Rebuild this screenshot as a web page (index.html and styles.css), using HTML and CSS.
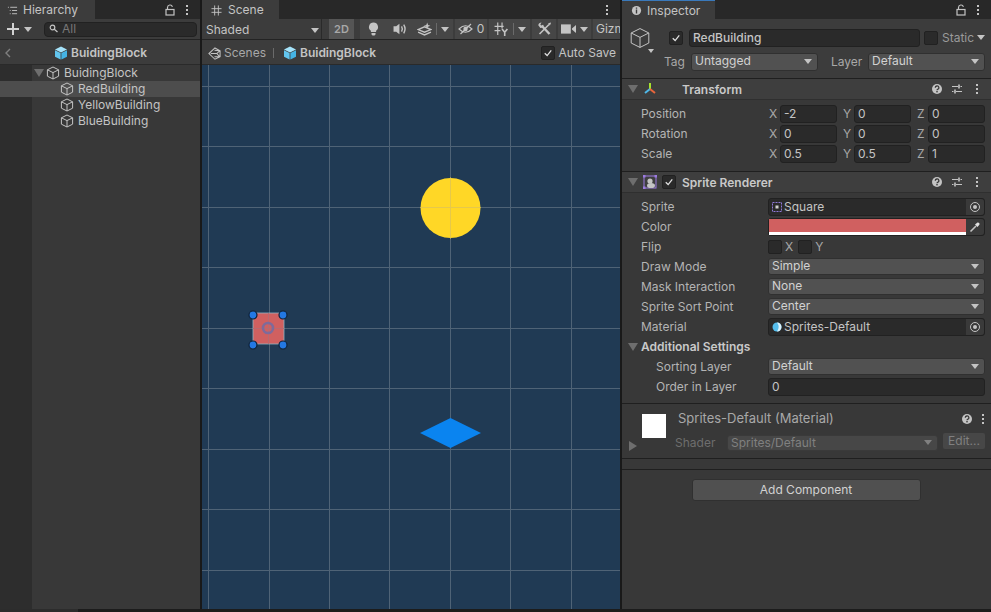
FILE: index.html
```html
<!DOCTYPE html>
<html lang="en">
<head>
    <meta charset="UTF-8">
    <meta name="viewport" content="width=device-width, initial-scale=1.0">
    <title>BuidingBlock - Unity</title>
    <link rel="stylesheet" href="styles.css">
</head>
<body>
    <svg class="defs" width="0" height="0">
        <symbol id="cube" viewBox="0 0 14 14">
            <path d="M7 1 L12.6 3.8 V10.2 L7 13 L1.4 10.2 V3.8 Z M1.4 3.8 L7 6.6 L12.6 3.8 M7 6.6 V13" fill="none" stroke="currentColor" stroke-width="1" stroke-linejoin="round" vector-effect="non-scaling-stroke"/>
        </symbol>
        <symbol id="cubeBlue" viewBox="0 0 14 14">
            <path d="M7 .5 L13 3.5 L7 6.5 L1 3.5 Z" fill="#a5e3fa"/>
            <path d="M1 4.2 L6.6 7 V13.6 L1 10.8 Z" fill="#62c5ee"/>
            <path d="M13 4.2 L7.4 7 V13.6 L13 10.8 Z" fill="#45b4e4"/>
        </symbol>
        <symbol id="lock" viewBox="0 0 12 12">
            <path d="M3.5 5 V3.4 A2.5 2.5 0 0 1 8.4 2.8" fill="none" stroke="currentColor" stroke-width="1.2"/>
            <rect x="2" y="5.5" width="8" height="5.5" fill="none" stroke="currentColor" stroke-width="1.2"/>
        </symbol>
        <symbol id="dots" viewBox="0 0 4 12">
            <rect x="1" y="1" width="2" height="2" fill="currentColor"/>
            <rect x="1" y="5" width="2" height="2" fill="currentColor"/>
            <rect x="1" y="9" width="2" height="2" fill="currentColor"/>
        </symbol>
        <symbol id="help" viewBox="0 0 12 12">
            <circle cx="6" cy="6" r="5" fill="currentColor"/>
            <path d="M4.3 4.8 A1.8 1.7 0 1 1 6.6 6.3 Q6 6.6 6 7.3" fill="none" stroke="#383838" stroke-width="1.3"/>
            <rect x="5.3" y="8" width="1.4" height="1.4" fill="#383838"/>
        </symbol>
        <symbol id="sliders" viewBox="0 0 12 12">
            <path d="M1 3.5 H7 M9.5 3.5 H11 M1 8.5 H2.5 M5 8.5 H11" stroke="currentColor" stroke-width="1.2"/>
            <path d="M8 1.5 V5.5 M4 6.5 V10.5" stroke="currentColor" stroke-width="1.6"/>
        </symbol>
        <symbol id="check" viewBox="0 0 14 14">
            <path d="M3.2 7.4 L6 10 L10.8 4" fill="none" stroke="#e0e0e0" stroke-width="1.5"/>
        </symbol>
        <symbol id="target" viewBox="0 0 12 12">
            <circle cx="6" cy="6" r="4.5" fill="none" stroke="currentColor" stroke-width="1"/>
            <circle cx="6" cy="6" r="2" fill="currentColor"/>
        </symbol>
    </svg>

    <div class="app">
        <section class="panel hierarchy">
            <div class="tabstrip">
                <div class="tab tab-hierarchy">
                    <svg class="tab-icon" viewBox="0 0 12 12"><path d="M1 2.5 H2 M3.5 2.5 H11 M3 6 H4 M5.5 6 H11 M3 9.5 H4 M5.5 9.5 H11" stroke="#c4c4c4" stroke-width="1"/></svg>
                    Hierarchy
                </div>
                <div class="tab-actions">
                    <svg class="ico-lock"><use href="#lock"/></svg>
                    <svg class="ico-dots"><use href="#dots"/></svg>
                </div>
            </div>
            <div class="hier-toolbar">
                <svg class="plus" viewBox="0 0 12 12"><path d="M6 0 V12 M0 6 H12" stroke="#d2d2d2" stroke-width="2"/></svg>
                <span class="caret caret-plus"></span>
                <div class="search">
                    <svg class="search-icon" viewBox="0 0 10 10"><circle cx="3.5" cy="3.5" r="2.3" fill="none" stroke="#c4c4c4" stroke-width="1.2"/><path d="M5.3 5.3 L8.5 8" stroke="#c4c4c4" stroke-width="1.2"/></svg>
                    All
                </div>
            </div>
            <div class="hier-crumb">
                <svg class="back" viewBox="0 0 6 10"><path d="M5 1 L1 5 L5 9" fill="none" stroke="#7f7f7f" stroke-width="1.4"/></svg>
                <svg class="cube-blue"><use href="#cubeBlue"/></svg>
                <b>BuidingBlock</b>
            </div>
            <div class="tree">
                <div class="tree-row">
                    <span class="fold-down"></span>
                    <svg class="cube"><use href="#cube"/></svg>
                    BuidingBlock
                </div>
                <div class="tree-row child selected"><svg class="cube"><use href="#cube"/></svg>RedBuilding</div>
                <div class="tree-row child"><svg class="cube"><use href="#cube"/></svg>YellowBuilding</div>
                <div class="tree-row child"><svg class="cube"><use href="#cube"/></svg>BlueBuilding</div>
            </div>
        </section>

        <section class="panel scene">
            <div class="tabstrip">
                <div class="tab tab-scene">
                    <svg class="tab-icon" viewBox="0 0 12 12"><path d="M.5 4 H11.5 M.5 8 H11.5 M4 .5 V11.5 M8 .5 V11.5" stroke="#c4c4c4" stroke-width="1"/></svg>
                    Scene
                </div>
                <div class="tab-actions">
                    <svg class="ico-dots"><use href="#dots"/></svg>
                </div>
            </div>
            <div class="scene-toolbar">
                <div class="shaded">Shaded<span class="caret"></span></div>
                <div class="tool tool-2d">2D</div>
                <div class="tool tool-bulb">
                    <svg class="tool-icon" viewBox="0 0 12 14"><path d="M6 .5 A4.5 4.5 0 0 1 8.6 8.7 V10 H3.4 V8.7 A4.5 4.5 0 0 1 6 .5 Z M4 11 H8 V12.4 L7 13.5 H5 L4 12.4 Z" fill="#c4c4c4"/></svg>
                </div>
                <div class="tool tool-sound">
                    <svg class="tool-icon" viewBox="0 0 14 12"><path d="M.5 3.5 H3 L6 1 V11 L3 8.5 H.5 Z" fill="#c4c4c4"/><path d="M8 3.5 Q9.5 6 8 8.5 M10 2 Q12.5 6 10 10" fill="none" stroke="#c4c4c4" stroke-width="1.3"/></svg>
                </div>
                <div class="tool tool-fx">
                    <svg class="tool-icon" viewBox="0 0 14 13"><path d="M1 7 L7 4.5 L13 7 L7 9.5 Z M1 9.5 L7 12 L13 9.5" fill="none" stroke="#c4c4c4" stroke-width="1.3"/><path d="M9.5 .5 L10.3 2.7 L12.5 3.5 L10.3 4.3 L9.5 6 L8.7 4.3 L6.5 3.5 L8.7 2.7 Z" fill="#c4c4c4"/></svg>
                    <i class="tool-sep"></i><span class="caret"></span>
                </div>
                <div class="tool tool-hidden">
                    <svg class="tool-icon" viewBox="0 0 15 12"><path d="M1 6 Q7.5 -.5 14 6 Q7.5 12.5 1 6 Z" fill="none" stroke="#c4c4c4" stroke-width="1.1"/><circle cx="7.5" cy="6" r="2.2" fill="#c4c4c4"/><path d="M2.5 11 L13 1" stroke="#c4c4c4" stroke-width="1.2"/></svg>
                    0
                </div>
                <div class="tool tool-grid">
                    <svg class="tool-icon" viewBox="0 0 14 13"><path d="M.5 4 H9 M.5 8 H6 M3.5 .5 V12 M7.5 .5 V6" fill="none" stroke="#c4c4c4" stroke-width="1.1"/><path d="M7.5 6.5 L10 9.5 L12.5 6.5 M10 9.5 V13" fill="none" stroke="#c4c4c4" stroke-width="1.5"/></svg>
                    <i class="tool-sep"></i><span class="caret"></span>
                </div>
                <div class="tool tool-wrench">
                    <svg class="tool-icon" viewBox="0 0 14 14"><path d="M4 3.5 L12 12" stroke="#c4c4c4" stroke-width="2.4"/><path d="M.8 3.2 A3.2 3.2 0 0 1 4 .5 L2.8 2.6 L4 4 L6 2.8 A3.2 3.2 0 0 1 2.8 6 Z" fill="#c4c4c4"/><path d="M11.5 2.5 L2 12" stroke="#c4c4c4" stroke-width="1.6"/><path d="M10.5 1.6 L13 .5 L13.5 1 L12.4 3.5 Z" fill="#c4c4c4"/></svg>
                </div>
                <div class="tool tool-camera">
                    <svg class="tool-icon" viewBox="0 0 13 10"><rect x="0" y="1" width="8.5" height="8" fill="#c4c4c4"/><path d="M9.5 4.5 L13 1.5 V8.5 L9.5 5.5 Z" fill="#c4c4c4"/></svg>
                    <span class="caret"></span>
                </div>
                <div class="tool tool-gizmos">Gizmos</div>
            </div>
            <div class="scene-crumb">
                <svg class="unity-logo" viewBox="0 0 14 14"><path d="M7.5 1 L13 4 V10.5 L7.5 13.2 L1 7 Z M7 3.5 L12.5 4 M7 10.5 L12.5 10.3 M3 7 H9.5 L12.5 4.2 M9.5 7 L12.5 10.3" fill="none" stroke="#c4c4c4" stroke-width="1.1"/></svg>
                <span class="crumb-scenes">Scenes</span>
                <i class="crumb-sep"></i>
                <svg class="cube-blue"><use href="#cubeBlue"/></svg>
                <b>BuidingBlock</b>
                <label class="autosave">
                    <span class="checkbox"><svg><use href="#check"/></svg></span>
                    Auto Save
                </label>
            </div>
            <svg class="viewport" viewBox="0 0 418 544">
                <g class="grid">
                    <path d="M6.5 0 V544 M67.5 0 V544 M127.5 0 V544 M187.5 0 V544 M248.5 0 V544 M308.5 0 V544 M369.5 0 V544"/>
                    <path d="M0 21.5 H418 M0 81.5 H418 M0 142.5 H418 M0 202.5 H418 M0 263.5 H418 M0 323.5 H418 M0 384.5 H418 M0 444.5 H418 M0 505.5 H418"/>
                </g>
                <circle cx="248.5" cy="143" r="30" fill="#ffd726"/>
                <path d="M248.5 112.5 V173.5 M218.5 142.5 H278.5" stroke="#e6c84a" stroke-width="1"/>
                <path d="M218 368 L248.5 353 L279 368 L248.5 383 Z" fill="#0a84f0"/>
                <rect x="51" y="248" width="31" height="31" fill="#d06060" stroke="#8fb3c4" stroke-width=".8"/>
                <path d="M51 263.5 H82 M66.5 248 V279" stroke="#b76a70" stroke-width="1"/>
                <circle cx="66" cy="263" r="5" fill="none" stroke="#7f6a9a" stroke-width="2.6"/>
                <g class="handles">
                    <circle cx="51" cy="250" r="4"/>
                    <circle cx="81" cy="250" r="4"/>
                    <circle cx="51" cy="280" r="4"/>
                    <circle cx="81" cy="280" r="4"/>
                </g>
            </svg>
        </section>

        <section class="panel inspector">
            <div class="tabstrip">
                <div class="tab tab-inspector">
                    <svg class="tab-icon" viewBox="0 0 12 12"><circle cx="6" cy="6" r="5" fill="#c4c4c4"/><path d="M6 5 V9.2 M6 2.6 V4" stroke="#3c3c3c" stroke-width="1.5"/></svg>
                    Inspector
                </div>
                <div class="tab-actions">
                    <svg class="ico-lock"><use href="#lock"/></svg>
                    <svg class="ico-dots"><use href="#dots"/></svg>
                </div>
            </div>

            <div class="object-head">
                <div class="object-row">
                    <svg class="object-cube"><use href="#cube"/></svg>
                    <span class="caret object-caret"></span>
                    <span class="checkbox"><svg><use href="#check"/></svg></span>
                    <div class="field name-field">RedBuilding</div>
                    <span class="checkbox"></span>
                    <span class="static">Static</span>
                    <span class="caret static-caret"></span>
                </div>
                <div class="object-row tag-row">
                    <span class="tag-label">Tag</span>
                    <div class="dropdown tag-drop">Untagged<span class="caret"></span></div>
                    <span class="layer-label">Layer</span>
                    <div class="dropdown layer-drop">Default<span class="caret"></span></div>
                </div>
            </div>

            <div class="comp-head">
                <span class="fold-down"></span>
                <svg class="comp-icon" viewBox="0 0 14 14"><path d="M7 1 V7" stroke="#a6e22e" stroke-width="2"/><path d="M7 7 L2 11" stroke="#4fb8e8" stroke-width="2"/><path d="M7 7 L12 11" stroke="#e8663c" stroke-width="2"/></svg>
                <span class="comp-spacer"></span>
                <b class="comp-title">Transform</b>
                <svg class="ico-help"><use href="#help"/></svg>
                <svg class="ico-sliders"><use href="#sliders"/></svg>
                <svg class="ico-dots"><use href="#dots"/></svg>
            </div>
            <div class="comp-body body-transform">
                <div class="prop">
                    <span class="prop-label">Position</span>
                    <div class="vec"><span>X</span><div class="field">-2</div><span>Y</span><div class="field">0</div><span>Z</span><div class="field">0</div></div>
                </div>
                <div class="prop">
                    <span class="prop-label">Rotation</span>
                    <div class="vec"><span>X</span><div class="field">0</div><span>Y</span><div class="field">0</div><span>Z</span><div class="field">0</div></div>
                </div>
                <div class="prop">
                    <span class="prop-label">Scale</span>
                    <div class="vec"><span>X</span><div class="field">0.5</div><span>Y</span><div class="field">0.5</div><span>Z</span><div class="field">1</div></div>
                </div>
            </div>

            <div class="comp-head">
                <span class="fold-down"></span>
                <svg class="comp-icon" viewBox="0 0 14 14"><rect x="1" y="1" width="12" height="12" fill="none" stroke="#9b7be0" stroke-width="1"/><path d="M0 0 H2.5 V2.5 H0 Z M11.5 0 H14 V2.5 H11.5 Z M0 11.5 H2.5 V14 H0 Z" fill="#9b7be0"/><circle cx="7" cy="6" r="2.6" fill="#c4c4c4"/><ellipse cx="8" cy="10.5" rx="4" ry="2.6" fill="#c4c4c4"/></svg>
                <span class="checkbox comp-check"><svg><use href="#check"/></svg></span>
                <b class="comp-title">Sprite Renderer</b>
                <svg class="ico-help"><use href="#help"/></svg>
                <svg class="ico-sliders"><use href="#sliders"/></svg>
                <svg class="ico-dots"><use href="#dots"/></svg>
            </div>
            <div class="comp-body body-sprite">
                <div class="prop">
                    <span class="prop-label">Sprite</span>
                    <div class="field object-field">
                        <svg class="asset-icon" viewBox="0 0 10 10"><rect x=".5" y=".5" width="9" height="9" fill="none" stroke="#8f78d8" stroke-dasharray="2 1"/><rect x="3.5" y="3.5" width="3" height="3" fill="#d2d2d2"/></svg>
                        Square
                        <span class="picker"><svg><use href="#target"/></svg></span>
                    </div>
                </div>
                <div class="prop">
                    <span class="prop-label">Color</span>
                    <div class="color-field">
                        <div class="swatch"></div>
                        <span class="picker">
                            <svg viewBox="0 0 12 12"><path d="M1.5 10.5 L7 5" stroke="#c4c4c4" stroke-width="1.6"/><path d="M6 3.5 L8.5 1.5 A1.6 1.6 0 0 1 10.5 3.5 L8.5 6 Z" fill="#e0e0e0"/></svg>
                        </span>
                    </div>
                </div>
                <div class="prop">
                    <span class="prop-label">Flip</span>
                    <div class="flip">
                        <span class="checkbox"></span><span>X</span>
                        <span class="checkbox"></span><span>Y</span>
                    </div>
                </div>
                <div class="prop">
                    <span class="prop-label">Draw Mode</span>
                    <div class="dropdown prop-drop">Simple<span class="caret"></span></div>
                </div>
                <div class="prop">
                    <span class="prop-label">Mask Interaction</span>
                    <div class="dropdown prop-drop">None<span class="caret"></span></div>
                </div>
                <div class="prop">
                    <span class="prop-label">Sprite Sort Point</span>
                    <div class="dropdown prop-drop">Center<span class="caret"></span></div>
                </div>
                <div class="prop">
                    <span class="prop-label">Material</span>
                    <div class="field object-field">
                        <svg class="asset-icon" viewBox="0 0 10 10"><circle cx="5" cy="5" r="4.5" fill="#55bdec"/><path d="M5 .5 A4.5 4.5 0 0 1 5 9.5 A7 7 0 0 0 5 .5" fill="#dff3fb"/></svg>
                        Sprites-Default
                        <span class="picker"><svg><use href="#target"/></svg></span>
                    </div>
                </div>
                <div class="prop">
                    <span class="fold-down"></span>
                    <b class="sub-title">Additional Settings</b>
                </div>
                <div class="prop indented">
                    <span class="prop-label">Sorting Layer</span>
                    <div class="dropdown prop-drop">Default<span class="caret"></span></div>
                </div>
                <div class="prop indented">
                    <span class="prop-label">Order in Layer</span>
                    <div class="field prop-input">0</div>
                </div>
            </div>

            <div class="material">
                <div class="material-thumb"></div>
                <span class="fold-right"></span>
                <div class="material-info">
                    <div class="material-top">
                        <span>Sprites-Default (Material)</span>
                        <svg class="ico-help"><use href="#help"/></svg>
                        <svg class="ico-dots"><use href="#dots"/></svg>
                    </div>
                    <div class="material-shader">
                        <span class="shader-label">Shader</span>
                        <div class="dropdown shader-drop">Sprites/Default<span class="caret"></span></div>
                        <div class="edit-btn">Edit...</div>
                    </div>
                </div>
            </div>
            <div class="material-foot"></div>
            <div class="add-row">
                <div class="add-btn">Add Component</div>
            </div>
        </section>
    </div>
    <div class="statusbar"><div class="status-progress"></div></div>
</body>
</html>
```

FILE: styles.css
```css
* {
    box-sizing: border-box;
}

html, body {
    margin: 0;
    height: 100%;
    overflow: hidden;
}

body {
    background-color: #191919;
    color: #c4c4c4;
    font-family: Inter, "Noto Sans", sans-serif;
    font-size: 12px;
    line-height: 1;
}

b {
    font-weight: 600;
}

.defs {
    display: block;
    height: 0;
}

.app {
    display: flex;
    gap: 2px;
    height: 609px;
}

.panel {
    display: flex;
    flex-direction: column;
    background-color: #383838;
    overflow: hidden;
}

.hierarchy { width: 200px; }
.scene { width: 418px; }
.inspector { width: 369px; }

/* tabs */
.tabstrip {
    display: flex;
    flex: none;
    justify-content: space-between;
    height: 19px;
    background-color: #282828;
}

.tab {
    display: flex;
    align-items: center;
    gap: 5px;
    padding: 1px 0 0 7px;
    background-color: #3c3c3c;
    font-size: 12px;
    color: #c4c4c4;
}

.tab-hierarchy { width: 95px; }
.tab-scene { width: 77px; padding-left: 9px; gap: 6px; }
.tab-inspector { width: 93px; padding-left: 9px; border-top: 1px solid #3a79bb; }

.tab-icon {
    flex: none;
    width: 11px;
    height: 11px;
}

.tab-actions {
    display: flex;
    align-items: center;
    gap: 9px;
    padding-right: 11px;
}

.ico-lock { width: 12px; height: 12px; color: #c4c4c4; }
.ico-dots { width: 4px; height: 12px; color: #c4c4c4; flex: none; }
.ico-help { width: 12px; height: 12px; color: #c4c4c4; flex: none; }
.ico-sliders { width: 12px; height: 12px; color: #c4c4c4; flex: none; }

.caret {
    display: inline-block;
    flex: none;
    width: 0;
    height: 0;
    border-left: 4px solid transparent;
    border-right: 4px solid transparent;
    border-top: 5px solid #c4c4c4;
}

.fold-down {
    flex: none;
    width: 0;
    height: 0;
    border-left: 5px solid transparent;
    border-right: 5px solid transparent;
    border-top: 8px solid #6e6e6e;
}

.fold-right {
    flex: none;
    width: 0;
    height: 0;
    border-top: 5px solid transparent;
    border-bottom: 5px solid transparent;
    border-left: 8px solid #6e6e6e;
}

/* hierarchy */
.hier-toolbar {
    display: flex;
    flex: none;
    align-items: center;
    height: 21px;
    padding-left: 7px;
    background-color: #3c3c3c;
    border-bottom: 1px solid #232323;
}

.plus { width: 12px; height: 12px; flex: none; }
.caret-plus { margin: 0 0 0 5px; }

.search {
    display: flex;
    align-items: center;
    gap: 3px;
    width: 153px;
    height: 15px;
    margin-left: 12px;
    padding-left: 4px;
    background-color: #2a2a2a;
    border-radius: 4px;
    border: 1px solid #212121;
    color: #787878;
}

.search-icon { width: 10px; height: 10px; }

.hier-crumb {
    display: flex;
    flex: none;
    align-items: center;
    height: 25px;
    padding: 2px 0 0 5px;
    background-color: #3c3c3c;
    border-bottom: 1px solid #2a2a2a;
    color: #c4c4c4;
}

.back { width: 6px; height: 10px; margin-right: 43px; }
.cube-blue { width: 14px; height: 14px; flex: none; margin-right: 3px; }

.tree {
    flex: 1;
    background: linear-gradient(to right, #2d2d2d 32px, #383838 32px);
}

.tree-row {
    display: flex;
    align-items: center;
    height: 16px;
    padding-left: 34px;
    color: #c4c4c4;
}

.tree-row .cube { margin-left: 2px; margin-right: 4px; }
.tree-row.child { padding-left: 60px; }
.tree-row.child .cube { margin-left: 0; margin-right: 4px; }
.tree-row.selected { background-color: #4d4d4d; }

.cube {
    width: 14px;
    height: 14px;
    flex: none;
    margin-right: 4px;
    color: #c4c4c4;
}

/* scene */
.scene-toolbar {
    display: flex;
    flex: none;
    align-items: stretch;
    height: 21px;
    gap: 2px;
    background-color: #3c3c3c;
    border-bottom: 1px solid #232323;
}

.shaded {
    display: flex;
    align-items: center;
    justify-content: space-between;
    flex: none;
    width: 120px;
    padding: 2px 2px 0 4px;
    margin-right: 5px;
    border-right: 1px solid #2a2a2a;
    color: #c4c4c4;
}

.tool {
    display: flex;
    flex: none;
    align-items: center;
    justify-content: center;
    gap: 4px;
    background-color: #464646;
    color: #c4c4c4;
    overflow: hidden;
}

.tool-icon { height: 14px; width: 15px; flex: none; }
.tool-sep { width: 1px; height: 12px; background-color: #6a6a6a; }

.tool-2d { width: 25px; margin-right: 4px; font-size: 11px; font-weight: 600; background-color: #555; color: #a8a8a8; }
.tool-bulb { width: 27px; margin-right: -2px; }
.tool-sound { width: 26px; margin-right: -2px; }
.tool-fx { width: 40px; }
.tool-hidden { width: 32px; }
.tool-grid { width: 41px; }
.tool-wrench { width: 24px; }
.tool-camera { width: 33px; }
.tool-gizmos { flex: 1; justify-content: flex-start; padding-left: 3px; white-space: nowrap; }

.scene-crumb {
    display: flex;
    flex: none;
    align-items: center;
    height: 25px;
    padding: 2px 0 0 6px;
    background-color: #3c3c3c;
    border-bottom: 1px solid #2a2a2a;
}

.unity-logo { width: 13px; height: 13px; margin-right: 3px; }
.crumb-scenes { color: #a8a8a8; }
.crumb-sep { width: 1px; height: 10px; background-color: #6a6a6a; margin: 0 9px 0 7px; }

.autosave {
    display: flex;
    align-items: center;
    gap: 3px;
    margin-left: auto;
    padding-right: 4px;
    color: #c4c4c4;
}

.checkbox {
    display: block;
    flex: none;
    width: 14px;
    height: 14px;
    background-color: #2a2a2a;
    border: 1px solid #212121;
    border-radius: 2px;
}

.checkbox svg {
    display: block;
    width: 12px;
    height: 12px;
}

.viewport {
    display: block;
    flex: 1;
    width: 418px;
    background-color: #203a54;
}

.grid path {
    fill: none;
    stroke: #4f6376;
    stroke-width: 1;
}

.handles circle {
    fill: #2378e4;
    stroke: #10233a;
    stroke-width: 1.2;
}

/* inspector */
.object-head {
    flex: none;
    height: 60px;
    padding-top: 9px;
    background-color: #3c3c3c;
    border-bottom: 1px solid #1f1f1f;
}

.object-row {
    display: flex;
    align-items: center;
    height: 19px;
}

.object-cube {
    width: 22px;
    height: 22px;
    flex: none;
    margin-left: 7px;
    color: #c4c4c4;
}

.object-caret { align-self: flex-end; margin: 0 0 -6px -3px; border-left-width: 3px; border-right-width: 3px; border-top-width: 4px; }
.object-row .checkbox:nth-of-type(2) { margin-left: 15px; }
.name-field { width: 231px; margin: 0 4px 0 6px; font-weight: 500; color: #d2d2d2; }

.static { margin-left: 4px; color: #9a9a9a; }
.static-caret { margin-left: 3px; }

.tag-row { margin-top: 5px; }
.tag-label { margin-left: 42px; width: 27px; color: #a8a8a8; }
.layer-label { margin-left: 13px; width: 37px; color: #a8a8a8; }
.tag-drop { width: 127px; }
.layer-drop { width: 117px; }

.field {
    display: flex;
    align-items: center;
    height: 18px;
    padding-left: 3px;
    background-color: #2a2a2a;
    border: 1px solid #212121;
    border-radius: 3px;
    color: #c4c4c4;
}

.dropdown {
    display: flex;
    align-items: center;
    justify-content: space-between;
    height: 18px;
    padding: 0 5px 1px 3px;
    background-color: #515151;
    border: 1px solid #303030;
    border-radius: 3px;
    color: #d2d2d2;
}

.comp-head {
    display: flex;
    flex: none;
    align-items: center;
    height: 21px;
    padding: 0 12px 0 6px;
    background-color: #3e3e3e;
    border-bottom: 1px solid #2f2f2f;
}

.comp-icon { width: 14px; height: 14px; flex: none; margin: 0 1px 0 5px; }
.comp-spacer { width: 17px; flex: none; }
.comp-check { margin-left: 4px; margin-right: 6px; flex: none; }
.comp-spacer + .comp-title { margin-left: 7px; }
.comp-title { flex: 1; padding-top: 2px; color: #c9c9c9; font-weight: 600; }
.comp-head .ico-sliders { margin: 0 12px 0 8px; }

.comp-body {
    flex: none;
    padding: 4px 6px 0 19px;
    border-bottom: 1px solid #1f1f1f;
}

.body-transform { height: 72px; }
.body-sprite { height: 211px; padding-top: 4px; }

.prop {
    display: flex;
    align-items: center;
    height: 20px;
}

.prop-label {
    flex: none;
    width: 127px;
    color: #b4b4b4;
}

.prop > .fold-down { margin-left: -13px; margin-right: 3px; }
.sub-title { color: #c9c9c9; font-weight: 600; }

.indented .prop-label { width: 112px; margin-left: 15px; }

.vec {
    display: grid;
    grid-template-columns: 11px 57px 17px 57px 17px 57px;
    align-items: center;
    margin-left: 1px;
    color: #a8a8a8;
}

.vec .field { height: 18px; }
.vec .field + span { padding-left: 6px; }

.object-field,
.color-field,
.prop-drop,
.prop-input {
    width: 217px;
}

.prop-drop {
    height: 17px;
    margin-bottom: 1px;
}

.object-field {
    gap: 2px;
    padding-left: 3px;
    height: 18px;
}

.asset-icon { width: 10px; height: 10px; flex: none; }

.picker {
    display: flex;
    align-items: center;
    justify-content: center;
    flex: none;
    width: 18px;
    height: 16px;
    margin-left: auto;
    background-color: #3a3a3a;
    color: #c4c4c4;
    border-radius: 0 3px 3px 0;
}

.picker svg { width: 12px; height: 12px; }

.color-field {
    display: flex;
    align-items: center;
    height: 18px;
    background-color: #2a2a2a;
    border-radius: 3px;
    border: 1px solid #212121;
}

.swatch {
    flex: 1;
    height: 16px;
    background-color: #d06060;
    border-bottom: 3px solid #fff;
}

.flip {
    display: flex;
    align-items: center;
    gap: 3px;
    color: #a8a8a8;
}

.flip span:nth-child(3) { margin-left: 2px; }

.material {
    display: flex;
    flex: none;
    height: 55px;
    padding: 5px 7px 0 20px;
    border-bottom: 1px solid #1f1f1f;
}

.material-thumb {
    flex: none;
    width: 24px;
    height: 24px;
    margin-top: 5px;
    background-color: #fff;
}

.material .fold-right {
    align-self: flex-end;
    margin: 0 0 7px -37px;
}

.material-info {
    flex: 1;
    margin-left: 41px;
}

.material-top {
    display: flex;
    align-items: center;
    height: 19px;
    font-size: 13px;
    color: #a8a8a8;
}

.material-top span { flex: 1; }
.material-top .ico-help { margin-right: 8px; }

.material-shader {
    display: flex;
    align-items: center;
    height: 18px;
    margin-top: 6px;
    margin-left: -3px;
}

.shader-label { width: 52px; color: #6e6e6e; }
.shader-drop { width: 211px; height: 16px; background-color: #474747; color: #808080; border-color: #3a3a3a; }
.shader-drop .caret { border-top-color: #808080; }

.edit-btn {
    width: 42px;
    height: 16px;
    margin: -4px 0 0 5px;
    padding-top: 2px;
    text-align: center;
    background-color: #474747;
    color: #808080;
    border-radius: 2px;
}

.material-foot {
    flex: none;
    height: 11px;
    border-bottom: 1px solid #1f1f1f;
}

.add-row {
    display: flex;
    justify-content: center;
}

.add-btn {
    width: 229px;
    height: 22px;
    margin: 9px 0 0 -1px;
    padding-top: 4px;
    text-align: center;
    background-color: #505050;
    border: 1px solid #303030;
    border-radius: 3px;
    color: #d2d2d2;
}

.statusbar {
    height: 3px;
    background-color: #1c1c1c;
}

.status-progress {
    width: 78px;
    height: 3px;
    background-color: #2c2c2c;
}
```
